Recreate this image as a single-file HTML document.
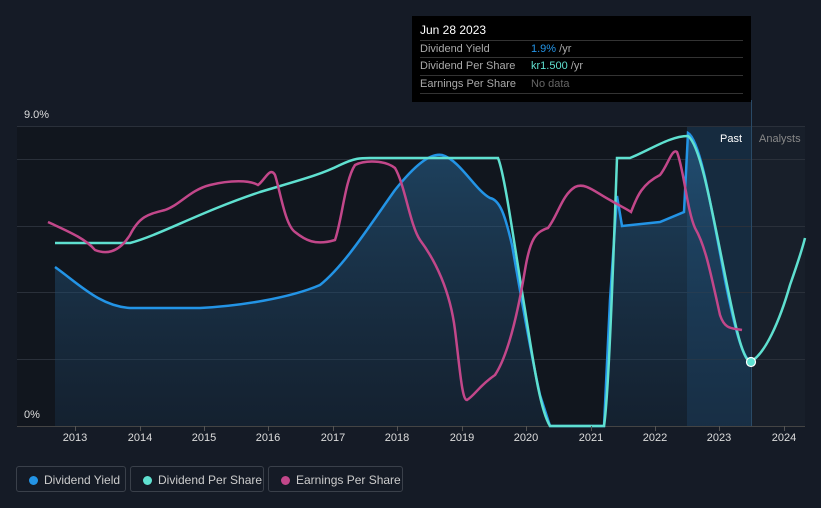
<!DOCTYPE html>
<html><head><meta charset="utf-8"><style>
body{margin:0;width:821px;height:508px;background:#151b26;font-family:"Liberation Sans",sans-serif;overflow:hidden;position:relative}
.tt{position:absolute;left:412px;top:16px;width:339px;height:86px;background:#000}
.tt .h{position:absolute;left:8px;top:7px;color:#fff;font-size:12px}
.row{position:absolute;left:8px;width:323px;border-top:1px solid #333;font-size:11px;color:#aaa;height:17px;line-height:17px}
.row span{position:absolute;left:111px}
.leg{position:absolute;top:466px;height:26px;border:1px solid #3a404a;border-radius:3px;color:#ccc;font-size:12px;line-height:26px;box-sizing:border-box}
.leg i{position:absolute;left:12px;top:9px;width:9px;height:9px;border-radius:50%}
.leg b{font-weight:normal;position:absolute;left:27px}
.yr{position:absolute;top:432px;color:#ddd;font-size:11px;width:40px;text-align:center}
</style></head><body>
<svg width="821" height="508" style="position:absolute;left:0;top:0">
<defs><linearGradient id="g" x1="0" y1="0" x2="0" y2="1"><stop offset="0" stop-color="#2a6a9a" stop-opacity=".55"/><stop offset="1" stop-color="#1a3550" stop-opacity=".35"/></linearGradient></defs>
<rect x="17" y="126" width="734" height="300" fill="#11161e"/>
<rect x="687" y="126" width="64" height="300" fill="#1a3a55" opacity=".6"/>
<rect x="751" y="126" width="54" height="300" fill="#181f2a"/>
<g stroke="#2a303a" stroke-width="1"><line x1="17" y1="126.5" x2="805" y2="126.5"/><line x1="17" y1="159.5" x2="805" y2="159.5"/><line x1="17" y1="226.5" x2="805" y2="226.5"/><line x1="17" y1="292.5" x2="805" y2="292.5"/><line x1="17" y1="359.5" x2="805" y2="359.5"/><line x1="17" y1="426.5" x2="805" y2="426.5" stroke="#444"/></g>
<line x1="751.5" y1="100" x2="751.5" y2="426" stroke="#2a4a66"/>
<path d="M55,267 C80,285 100,306 130,308 L200,308 C240,306 290,298 320,285 C345,265 370,225 395,190 C415,165 430,153 442,155 C460,160 475,190 490,198 C500,200 505,215 512,245 C520,290 530,350 540,395 L550,426 L604,426 L610,300 L617,196 L622,226 L660,222 L684,212 L688,133 C700,140 710,200 725,280 C735,330 742,355 750,362 L751,426 L55,426Z" fill="url(#g)"/>
<path d="M55,267 C80,285 100,306 130,308 L200,308 C240,306 290,298 320,285 C345,265 370,225 395,190 C415,165 430,153 442,155 C460,160 475,190 490,198 C500,200 505,215 512,245 C520,290 530,350 540,395 L550,426 L604,426 L610,300 L617,196 L622,226 L660,222 L684,212 L688,133 C700,140 710,200 725,280 C735,330 742,355 750,362" fill="none" stroke="#2394e6" stroke-width="2.5"/>
<path d="M55,243 L130,243 C160,235 200,212 260,192 C300,180 320,175 340,165 C355,158 360,158 370,158 L498,158 C505,175 515,250 525,310 C533,360 540,410 550,426 L604,426 C608,400 612,300 617,158 L630,158 C650,150 670,136 688,136 C700,145 710,200 725,275 C735,325 742,358 750,362 C765,355 780,320 790,285 C797,265 802,250 805,238" fill="none" stroke="#5fe0d0" stroke-width="2.5"/>
<path d="M48,222 C65,230 85,238 95,250 C105,254 118,254 130,235 C140,215 150,214 165,210 C180,205 190,190 210,185 C230,180 250,180 258,185 C265,180 270,166 275,175 C280,190 285,225 295,232 C305,240 315,246 335,240 C342,220 345,180 355,165 C365,160 385,160 395,168 C405,185 410,225 420,240 C435,260 450,290 455,330 C460,370 462,400 467,400 C475,395 480,385 495,375 C505,360 515,330 525,270 C530,240 535,232 548,228 C558,215 562,195 575,187 C585,182 595,192 610,200 C620,206 625,208 631,212 C636,200 640,185 660,175 C668,165 672,148 677,152 C684,170 687,210 695,228 C705,245 710,270 720,315 C725,330 732,328 742,330" fill="none" stroke="#c2478a" stroke-width="2.5"/>
<circle cx="751" cy="362" r="4.5" fill="#5fe0d0" stroke="#fff" stroke-width="1.2"/>
<g stroke="#555"><line x1="75.5" y1="426" x2="75.5" y2="431"/><line x1="140.5" y1="426" x2="140.5" y2="431"/><line x1="204.5" y1="426" x2="204.5" y2="431"/><line x1="268.5" y1="426" x2="268.5" y2="431"/><line x1="333.5" y1="426" x2="333.5" y2="431"/><line x1="397.5" y1="426" x2="397.5" y2="431"/><line x1="462.5" y1="426" x2="462.5" y2="431"/><line x1="526.5" y1="426" x2="526.5" y2="431"/><line x1="591.5" y1="426" x2="591.5" y2="431"/><line x1="655.5" y1="426" x2="655.5" y2="431"/><line x1="719.5" y1="426" x2="719.5" y2="431"/><line x1="784.5" y1="426" x2="784.5" y2="431"/></g>
<text x="24" y="118" fill="#ddd" font-size="11" font-family="Liberation Sans">9.0%</text>
<text x="24" y="418" fill="#ddd" font-size="11" font-family="Liberation Sans">0%</text>
<text x="720" y="142" fill="#fff" font-size="11" font-family="Liberation Sans">Past</text>
<text x="759" y="142" fill="#888" font-size="11" font-family="Liberation Sans">Analysts</text>
</svg>
<div class="yr" style="left:55px">2013</div><div class="yr" style="left:120px">2014</div><div class="yr" style="left:184px">2015</div><div class="yr" style="left:248px">2016</div><div class="yr" style="left:313px">2017</div><div class="yr" style="left:377px">2018</div><div class="yr" style="left:442px">2019</div><div class="yr" style="left:506px">2020</div><div class="yr" style="left:571px">2021</div><div class="yr" style="left:635px">2022</div><div class="yr" style="left:699px">2023</div><div class="yr" style="left:764px">2024</div>
<div class="tt"><div class="h">Jun 28 2023</div>
<div class="row" style="top:24px">Dividend Yield<span><b style="font-weight:normal;color:#2394e6">1.9%</b> /yr</span></div>
<div class="row" style="top:41px">Dividend Per Share<span><b style="font-weight:normal;color:#5fe0d0">kr1.500</b> /yr</span></div>
<div class="row" style="top:59px;border-bottom:1px solid #333">Earnings Per Share<span style="color:#666">No data</span></div>
</div>
<div class="leg" style="left:16px;width:110px"><i style="background:#2394e6"></i><b>Dividend Yield</b></div>
<div class="leg" style="left:130px;width:134px"><i style="background:#5fe0d0"></i><b>Dividend Per Share</b></div>
<div class="leg" style="left:268px;width:135px"><i style="background:#c2478a"></i><b>Earnings Per Share</b></div>
</body></html>
